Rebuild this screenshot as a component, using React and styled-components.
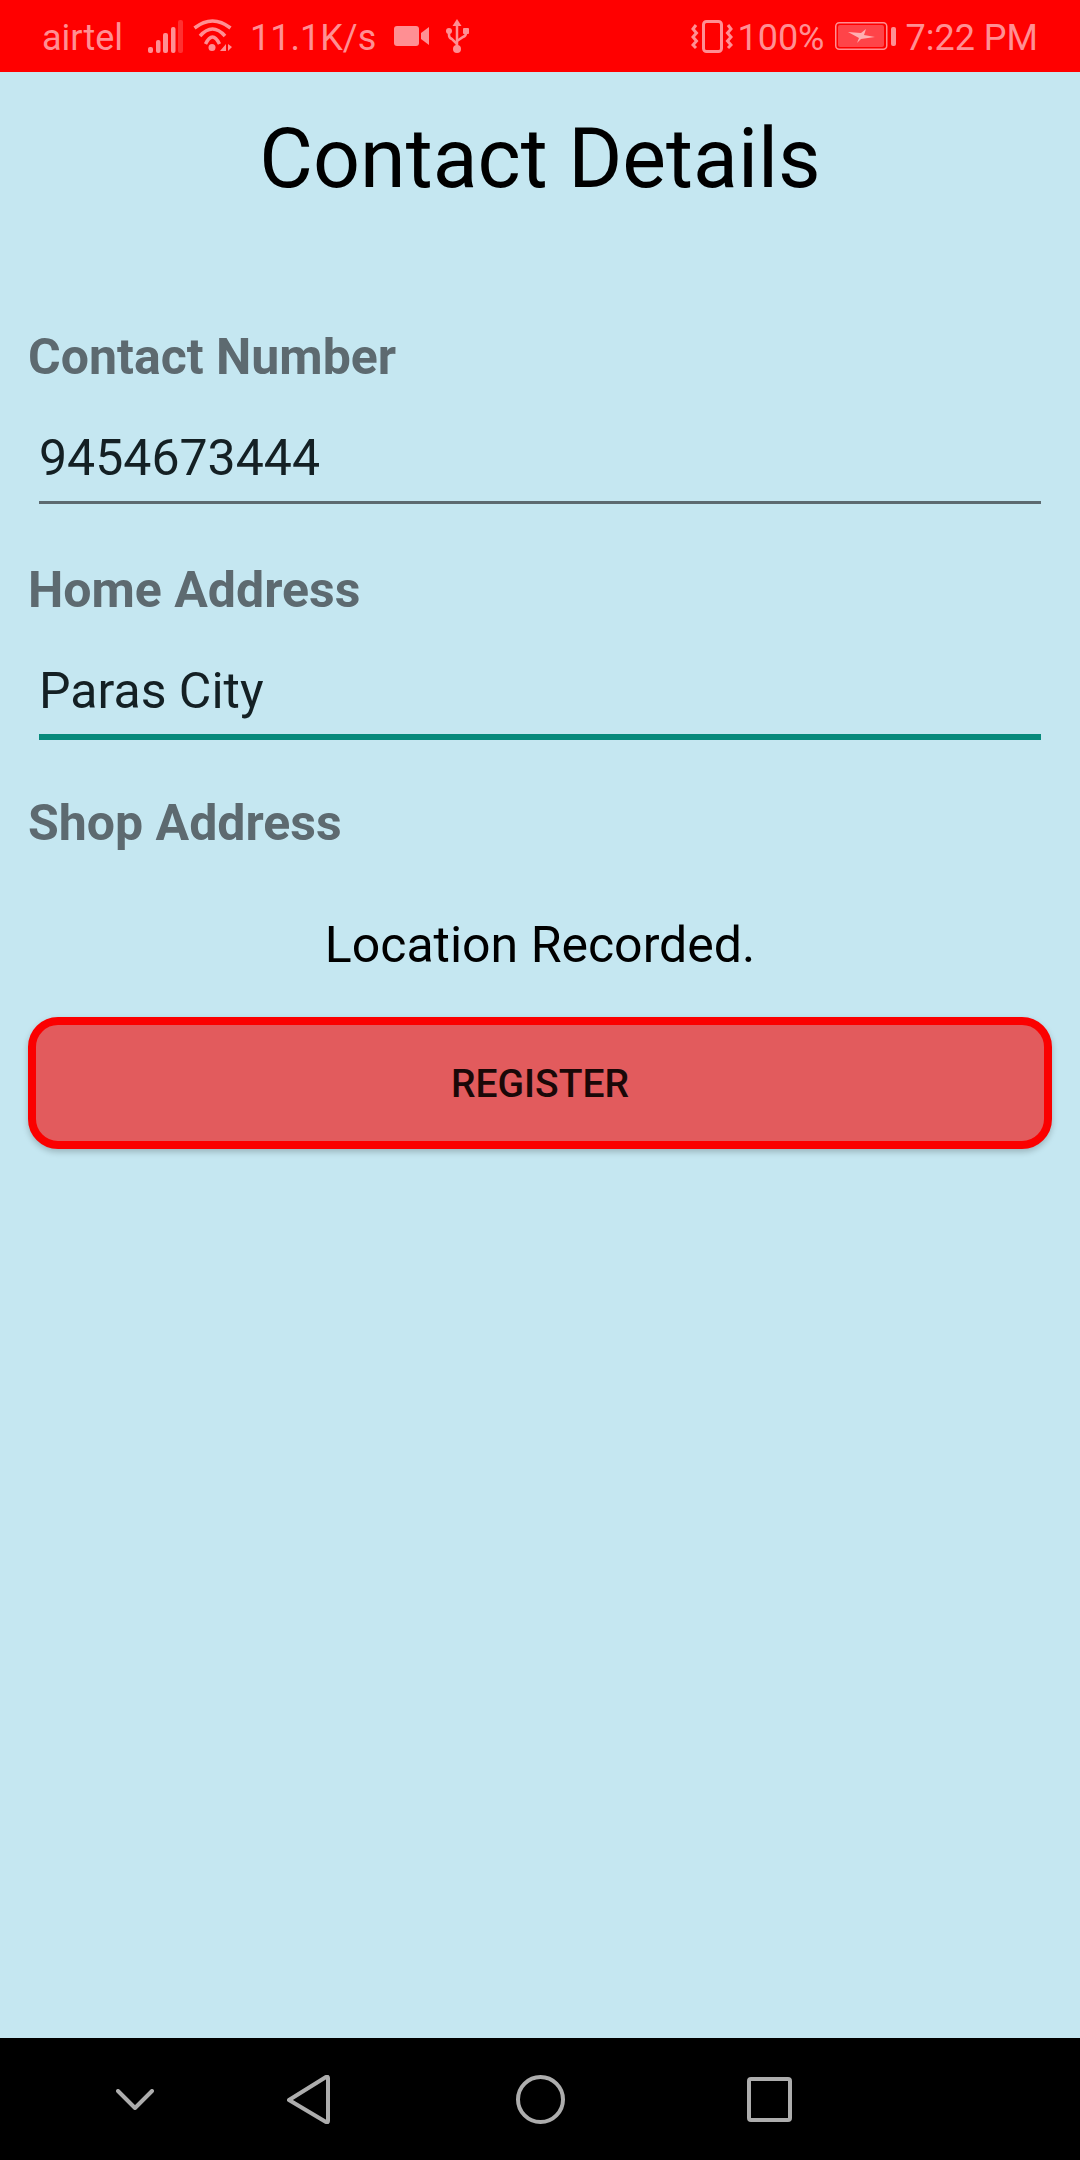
import React from "react";
import styled, { createGlobalStyle } from "styled-components";

const Global = createGlobalStyle`
  html, body { margin: 0; padding: 0; }
  body { font-family: Roboto, "Liberation Sans", sans-serif; }
`;

const Phone = styled.div`
  width: 1080px;
  height: 2160px;
  display: flex;
  flex-direction: column;
  background: #c5e7f1;
  overflow: hidden;
`;

const StatusBar = styled.header`
  height: 72px;
  flex: none;
  background: #ff0000;
  color: #ff8f93;
  display: flex;
  justify-content: space-between;
  align-items: center;
  padding: 0 42px;
  font-size: 36px;
  box-sizing: border-box;
`;

const StatusGroup = styled.div`
  display: flex;
  align-items: center;
`;

const StatusText = styled.span`
  margin-left: ${(p) => p.$ml || 0}px;
  padding-top: 4px;
  line-height: 40px;
`;

const StatusIcon = styled.svg`
  display: block;
  flex: none;
  margin-left: ${(p) => p.$ml || 0}px;
`;

const Content = styled.main`
  flex: 1;
  display: flex;
  flex-direction: column;
  padding: 0 28px;
`;

const Title = styled.h1`
  margin: 42px 0 0;
  font-size: 82.5px;
  line-height: 90px;
  font-weight: 400;
  color: #000;
  text-align: center;
`;

const FieldLabel = styled.label`
  display: block;
  margin-top: ${(p) => p.$mt}px;
  font-size: 50px;
  line-height: 58px;
  font-weight: 700;
  color: #5d6a70;
`;

const Input = styled.div`
  margin: ${(p) => (p.$focused ? 43 : 42)}px 11px 0 11px;
  padding-top: ${(p) => (p.$focused ? 0 : 1)}px;
  height: 72px;
  font-size: 50px;
  line-height: 58px;
  color: #142024;
  border-bottom: ${(p) => (p.$focused ? "6px solid #078a7c" : "3px solid #5d6a70")};
`;

const Notice = styled.p`
  margin: 64px 0 0;
  font-size: 50px;
  line-height: 58px;
  color: #000;
  text-align: center;
`;

const RegisterButton = styled.button`
  margin-top: 43px;
  padding: 2px 0 0;
  height: 132px;
  width: 100%;
  box-sizing: border-box;
  border: 8px solid #fb0000;
  border-radius: 30px;
  background: #e25b5d;
  color: #1a0808;
  font-family: inherit;
  font-size: 39px;
  font-weight: 500;
  box-shadow: 0 3px 6px rgba(0, 0, 0, 0.22);
`;

const NavBar = styled.nav`
  height: 122px;
  flex: none;
  background: #000;
  display: grid;
  grid-template-columns: 100px 247px 216px 242px;
  align-items: center;
  padding-left: 85px;
`;

const NavIcon = styled.svg`
  display: block;
  justify-self: center;
  fill: none;
  stroke: #adadad;
  stroke-width: 4;
  stroke-linecap: round;
  stroke-linejoin: round;
`;

export default function App() {
  return (
    <Phone>
      <Global />
      <StatusBar>
        <StatusGroup>
          <StatusText>airtel</StatusText>
          <StatusIcon $ml={25} width="35" height="33" viewBox="0 0 35 33" fill="#ff8f93">
            <rect x="0" y="27" width="5" height="6" rx="2" />
            <rect x="8" y="20" width="4.5" height="13" rx="2" />
            <rect x="15" y="13" width="5" height="20" rx="2" />
            <rect x="23" y="7" width="4.5" height="26" rx="2" />
            <rect x="30" y="0" width="5" height="33" rx="2" fill="#ff3030" />
          </StatusIcon>
          <StatusIcon $ml={10} width="39" height="34" viewBox="0 0 39 34" fill="none" stroke="#ff8f93" strokeWidth="3.5">
            <path d="M1.5 9 Q19.5 -5 37.5 9" />
            <path d="M7 17 Q19.5 3 32 17" />
            <path d="M12.5 25 Q19.5 11 26.5 25" />
            <circle cx="19" cy="28.5" r="3.5" fill="#ff8f93" stroke="none" />
            <path d="M27 32 L33 25 V32Z M35 25 V32 L39 28Z" fill="#ff8f93" stroke="none" />
          </StatusIcon>
          <StatusText $ml={18}>11.1K/s</StatusText>
          <StatusIcon $ml={18} width="36" height="20" viewBox="0 0 36 20" fill="#ff8f93">
            <path d="M3 0 H22 Q25 0 25 3 V17 Q25 20 22 20 H3 Q0 20 0 17 V3 Q0 0 3 0Z" />
            <path d="M27 7 L35 1 V19 L27 13Z" />
          </StatusIcon>
          <StatusIcon $ml={16} width="23" height="34" viewBox="0 0 23 34" fill="none" stroke="#ff8f93" strokeWidth="2.5">
            <path d="M11 4 V30" />
            <path d="M11 0 L15.5 7 H6.5Z" fill="#ff8f93" stroke="none" />
            <circle cx="11" cy="30" r="4" fill="#ff8f93" stroke="none" />
            <path d="M3 12 V16 Q3 19 6 20 L11 25" />
            <path d="M20 12 V14 Q20 17 17 18 L11 22" />
            <circle cx="3" cy="12" r="3" fill="#ff8f93" stroke="none" />
            <rect x="17" y="9" width="6" height="6" rx="1" fill="#ff8f93" stroke="none" />
          </StatusIcon>
        </StatusGroup>
        <StatusGroup>
          <StatusIcon width="42" height="33" viewBox="0 0 42 33" fill="none" stroke="#ff8f93" strokeWidth="3">
            <rect x="12.5" y="1.5" width="18" height="30" rx="3" />
            <path d="M5 5 L2 9 L5.5 13 L2 17 L5.5 21 L2 25 L5 28" />
            <path d="M37 5 L40 9 L36.5 13 L40 17 L36.5 21 L40 25 L37 28" />
          </StatusIcon>
          <StatusText $ml={4}>100%</StatusText>
          <StatusIcon $ml={10} width="61" height="28" viewBox="0 0 61 28">
            <rect x="0.75" y="0.75" width="51" height="26.5" rx="3.5" fill="none" stroke="#ff8f93" strokeWidth="1.5" />
            <rect x="3" y="3" width="46" height="22" rx="2" fill="#ff4449" />
            <rect x="56" y="5" width="5" height="19" rx="2" fill="#ff8f93" />
            <path d="M13 10 L26 11 L31 7 L29 13 L40 15 L26 17 L22 21 L24 16Z" fill="#ffb0b2" />
          </StatusIcon>
          <StatusText $ml={10}>7:22 PM</StatusText>
        </StatusGroup>
      </StatusBar>
      <Content>
        <Title>Contact Details</Title>
        <FieldLabel $mt={124}>Contact Number</FieldLabel>
        <Input>9454673444</Input>
        <FieldLabel $mt={57}>Home Address</FieldLabel>
        <Input $focused>Paras City</Input>
        <FieldLabel $mt={54}>Shop Address</FieldLabel>
        <Notice>Location Recorded.</Notice>
        <RegisterButton>REGISTER</RegisterButton>
      </Content>
      <NavBar>
        <NavIcon width="38" height="21" viewBox="0 0 38 21">
          <path d="M2 2 L19 19 L36 2" />
        </NavIcon>
        <NavIcon width="43" height="49" viewBox="0 0 43 49">
          <path d="M41 3 V46 Q41 48 39 47 L2 25 L39 2 Q41 1 41 3Z" />
        </NavIcon>
        <NavIcon width="49" height="49" viewBox="0 0 49 49">
          <circle cx="24.5" cy="24.5" r="22.5" />
        </NavIcon>
        <NavIcon width="45" height="45" viewBox="0 0 45 45">
          <rect x="2" y="2" width="41" height="41" rx="2" />
        </NavIcon>
      </NavBar>
    </Phone>
  );
}
